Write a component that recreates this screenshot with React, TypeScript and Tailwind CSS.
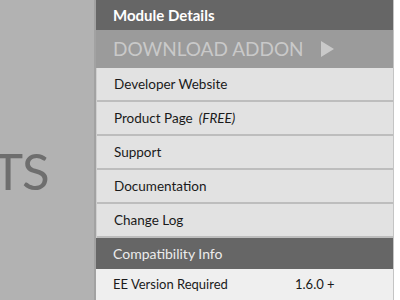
import React from "react";

const font = { fontFamily: "Lato, 'Open Sans', sans-serif" };

function Row({ children }: { children: React.ReactNode }) {
  return (
    <div className="h-[34px] flex items-center pl-[17px] bg-[#e2e2e2] border-b-2 border-[#bdbdbd] text-[13.5px] text-[#1a1a1a]">
      {children}
    </div>
  );
}

export default function App() {
  return (
    <div className="w-[400px] h-[300px] flex bg-white overflow-hidden" style={font}>
      <div className="w-[96px] h-full bg-[#b2b2b2] border-r-2 border-[#a2a2a2] flex flex-col overflow-hidden">
        <div className="h-[145px]" />
        <div className="text-[51px] leading-none text-[#6e6e6e] tracking-[-1px] -ml-[7px]">TS</div>
      </div>
      <div className="w-[298px] h-full flex flex-col border-r border-[#c4c4c4]">
        <div className="h-[30px] bg-[#666666] flex items-center pl-[17px] text-white font-bold text-[15px]">
          Module Details
        </div>
        <div className="h-[38px] bg-[#9b9b9b] flex items-center pl-[17px] text-[#c9c9c9] text-[19px]">
          <span>DOWNLOAD ADDON</span>
          <svg width="15" height="16" viewBox="0 0 15 16" className="ml-[16px]">
            <polygon points="1,0 14,8 1,16" fill="#c9c9c9" />
          </svg>
        </div>
        <div className="flex flex-col border-l border-[#cfcfcf]">
          <Row>Developer Website</Row>
          <Row>
            Product Page <span className="italic ml-[6px]">(FREE)</span>
          </Row>
          <Row>Support</Row>
          <Row>Documentation</Row>
          <Row>Change Log</Row>
        </div>
        <div className="h-[31px] bg-[#666666] flex items-center pl-[17px] text-[#ececec] text-[14px]">
          Compatibility Info
        </div>
        <div className="flex-1 bg-[#efefef] flex items-center pl-[17px] text-[13px] text-[#1a1a1a]">
          <span className="w-[182px]">EE Version Required</span>
          <span>1.6.0 +</span>
        </div>
      </div>
    </div>
  );
}
